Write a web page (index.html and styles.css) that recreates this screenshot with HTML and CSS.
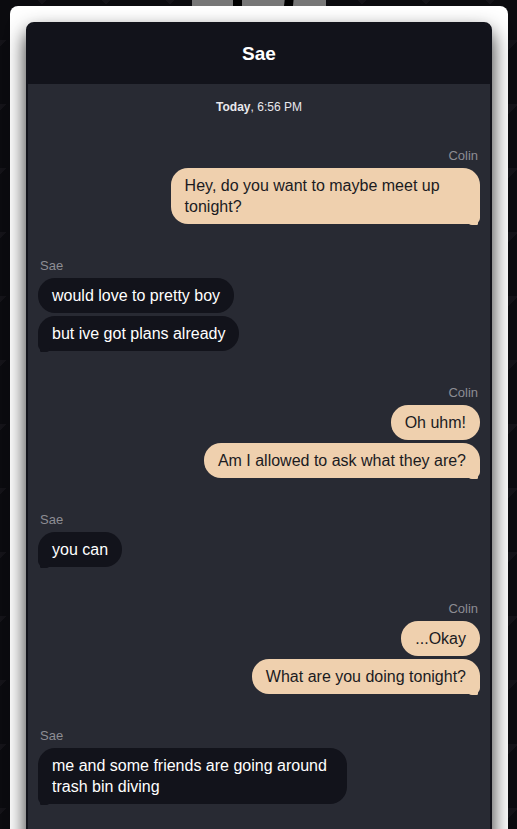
FILE: index.html
```html
<!DOCTYPE html>
<html lang="en">
<head>
<meta charset="UTF-8" />
<meta name="viewport" content="width=device-width, initial-scale=1" />
<title>Sae</title>
<link rel="stylesheet" href="styles.css">
</head>
<body>
  <!-- site logo, mostly hidden behind the card -->
  <svg class="logo" width="134" height="40" viewBox="0 0 134 40">
    <rect width="134" height="40" fill="#777"/>
    <path d="M41 0 H50 V40 H41 Z" fill="#000"/>
    <path d="M75 0 H108 L104 6 L101 40 H92 L96 6 Q 92 4 86 6 Z" fill="#000"/>
  </svg>

  <div class="card">
    <div class="chat">
      <div class="chat-header">Sae</div>

      <div class="messages">
        <div class="timestamp"><b>Today</b>, 6:56 PM</div>

        <div class="group me">
          <div class="sender">Colin</div>
          <div class="bubble">Hey, do you want to maybe meet up tonight?</div>
        </div>

        <div class="group them">
          <div class="sender">Sae</div>
          <div class="bubble">would love to pretty boy</div>
          <div class="bubble">but ive got plans already</div>
        </div>

        <div class="group me">
          <div class="sender">Colin</div>
          <div class="bubble">Oh uhm!</div>
          <div class="bubble">Am I allowed to ask what they are?</div>
        </div>

        <div class="group them">
          <div class="sender">Sae</div>
          <div class="bubble">you can</div>
        </div>

        <div class="group me">
          <div class="sender">Colin</div>
          <div class="bubble">...Okay</div>
          <div class="bubble">What are you doing tonight?</div>
        </div>

        <div class="group them">
          <div class="sender">Sae</div>
          <div class="bubble">me and some friends are going around trash bin diving</div>
        </div>
      </div>
    </div>
  </div>
</body>
</html>
```

FILE: styles.css
```css
/* Reset & base */
* {
  box-sizing: border-box;
}
body {
  font-family: "Liberation Sans", Arial, sans-serif;
  background-color: #0b0b0f;
  background-image:
    linear-gradient(135deg, #141318 22%, transparent 22%),
    linear-gradient(225deg, #141318 22%, transparent 22%);
  background-size: 64px 64px;
  background-position: -22px 40px;
  margin: 0;
  padding: 6px 9px 0 10px;
  position: relative;
}

.logo {
  position: absolute;
  top: -34px;
  left: 192px;
  display: block;
}

.card {
  position: relative;
  z-index: 1;
  background: #fff;
  border-radius: 8px;
  padding: 16px;
}

/* Chat window */
.chat {
  background: #282a33;
  border: 2px solid #12131b;
  border-radius: 8px;
  box-shadow: 0 10px 20px rgba(0,0,0,0.85);
  overflow: hidden;
}

.chat-header {
  background: #12131b;
  color: #fff;
  font-weight: 700;
  font-size: 19px;
  height: 62px;
  padding-top: 2px;
  display: flex;
  align-items: center;
  justify-content: center;
  margin: -2px -2px 0;
}

.messages {
  padding: 16px 10px 60px;
  display: flex;
  flex-direction: column;
}

.timestamp {
  text-align: center;
  color: #e8e8ec;
  font-size: 12px;
  line-height: 14px;
}

/* Message groups */
.group {
  display: flex;
  flex-direction: column;
  gap: 3px;
  margin-top: 34px;
}
.group.me {
  align-items: flex-end;
}
.group.them {
  align-items: flex-start;
}

.sender {
  font-size: 13px;
  line-height: 16px;
  color: #8d8d93;
  padding: 0 2px;
  margin-bottom: 1px;
}

.bubble {
  position: relative;
  max-width: 70%;
  padding: 7px 14px;
  font-size: 16px;
  line-height: 21px;
  border-radius: 17px;
}

.me .bubble {
  background: #efd0ae;
  color: #1b1b1f;
}
.them .bubble {
  background: #12131b;
  color: #fff;
}

/* little tail on the last bubble of a group */
.me .bubble:last-child {
  border-bottom-right-radius: 6px;
}
.me .bubble:last-child::after {
  content: "";
  position: absolute;
  right: 2px;
  bottom: -1px;
  width: 10px;
  height: 4px;
  background: #efd0ae;
  border-radius: 0 0 2px 6px;
}

.them .bubble:last-child {
  border-bottom-left-radius: 6px;
}
.them .bubble:last-child::after {
  content: "";
  position: absolute;
  left: 2px;
  bottom: -1px;
  width: 10px;
  height: 4px;
  background: #12131b;
  border-radius: 0 0 6px 2px;
}
```
